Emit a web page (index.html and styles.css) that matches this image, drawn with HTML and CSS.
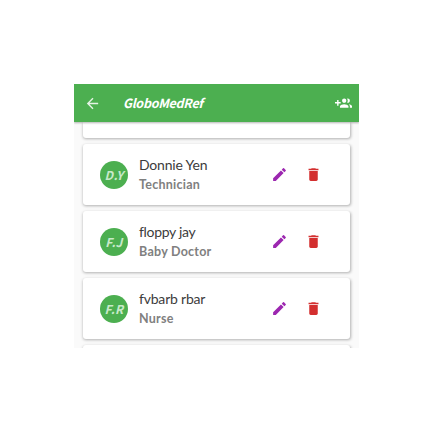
FILE: index.html
```
<!DOCTYPE html>
<html lang="en">
<head>
<meta charset="utf-8">
<title>GloboMedRef</title>
<link rel="stylesheet" href="styles.css">
</head>
<body>
<svg class="symbols" width="0" height="0">
<symbol id="edit" viewBox="0 0 24 24"><path d="M3 17.25V21h3.75L17.81 9.94l-3.75-3.75L3 17.25zM20.71 7.04a1 1 0 0 0 0-1.41l-2.34-2.34a1 1 0 0 0-1.41 0l-1.83 1.83 3.75 3.75 1.83-1.83z"/></symbol>
<symbol id="delete" viewBox="0 0 24 24"><path d="M6 19c0 1.1.9 2 2 2h8c1.1 0 2-.9 2-2V7H6v12zM19 4h-3.5l-1-1h-5l-1 1H5v2h14V4z"/></symbol>
</svg>
<main class="screen">
<header class="bar">
<svg class="back" viewBox="0 0 24 24"><path d="M20 11H7.83l5.59-5.59L12 4l-8 8 8 8 1.41-1.41L7.83 13H20v-2z"/></svg>
<h1 class="title">GloboMedRef</h1>
<svg class="add" viewBox="0 0 24 24"><path d="M8 10H5V7H3v3H0v2h3v3h2v-3h3v-2zm10 1c1.66 0 2.99-1.34 2.99-3S19.66 5 18 5c-.32 0-.63.05-.91.14.57.81.9 1.79.9 2.86s-.34 2.04-.9 2.86c.28.09.59.14.91.14zm-5 0c1.66 0 2.99-1.34 2.99-3S14.66 5 13 5c-1.66 0-3 1.34-3 3s1.34 3 3 3zm6.62 2.16c.83.73 1.38 1.66 1.38 2.84v2h3v-2c0-1.54-2.37-2.49-4.38-2.84zM13 13c-2 0-6 1-6 3v2h12v-2c0-2-4-3-6-3z"/></svg>
</header>
<section class="list">
<article class="card card-first"></article>
<article class="card">
<div class="avatar">D.Y</div>
<div class="info"><div class="name">Donnie Yen</div><div class="role">Technician</div></div>
<svg class="icon edit"><use href="#edit"/></svg><svg class="icon delete"><use href="#delete"/></svg>
</article>
<article class="card">
<div class="avatar">F.J</div>
<div class="info"><div class="name name-tight">floppy jay</div><div class="role">Baby Doctor</div></div>
<svg class="icon edit"><use href="#edit"/></svg><svg class="icon delete"><use href="#delete"/></svg>
</article>
<article class="card">
<div class="avatar">F.R</div>
<div class="info"><div class="name">fvbarb rbar</div><div class="role">Nurse</div></div>
<svg class="icon edit"><use href="#edit"/></svg><svg class="icon delete"><use href="#delete"/></svg>
</article>
<article class="card"></article>
</section>
</main>
</body>
</html>
```
FILE: styles.css
```
* { box-sizing: border-box; }
body { margin: 0; padding: 84px 73px 0 74px; background: #fff; }
.symbols { display: block; }
.screen { width: 285px; height: 264px; overflow: hidden; background: #fafafa; }
.bar {
  position: relative;
  z-index: 1;
  display: flex;
  align-items: center;
  height: 38px;
  padding: 0 7px 0 10px;
  background: #4caf50;
  box-shadow: 0 1px 2px rgba(0, 0, 0, .3);
  color: #fff;
  fill: #fff;
}
.back { width: 17px; height: 17px; opacity: .85; }
.title {
  flex: 1;
  margin: 0 0 0 22px;
  font: italic 700 12.5px/18px "Noto Sans CJK SC", sans-serif;
  letter-spacing: -.28px;
}
.add { width: 17px; height: 17px; }
.list { display: flex; flex-direction: column; gap: 6px; padding: 0 9px; }
.card {
  display: flex;
  flex: none;
  align-items: center;
  height: 61px;
  padding: 0 28px 0 17px;
  border-radius: 3px;
  background: #fff;
  box-shadow: .5px 1px 3px rgba(0, 0, 0, .3);
}
.card-first { height: 16px; border-radius: 0 0 3px 3px; }
.avatar {
  width: 28px;
  height: 28px;
  border-radius: 50%;
  background: #4caf50;
  color: #c8e9ca;
  font: italic 700 12px/28px "Noto Sans CJK SC", sans-serif;
  letter-spacing: .3px;
  text-align: center;
}
.info { flex: 1; margin-left: 11px; white-space: nowrap; }
.name {
  color: #3c3c3c;
  font: 400 14px/20px Lato, sans-serif;
  letter-spacing: -.2px;
}
.name-tight { letter-spacing: -.32px; }
.role {
  color: #808080;
  font: 700 12.5px/19px Lato, sans-serif;
  letter-spacing: .25px;
}
.icon { width: 17px; height: 17px; }
.edit { fill: #9c27b0; }
.delete { margin-left: 17px; fill: #d32f2f; }
```
